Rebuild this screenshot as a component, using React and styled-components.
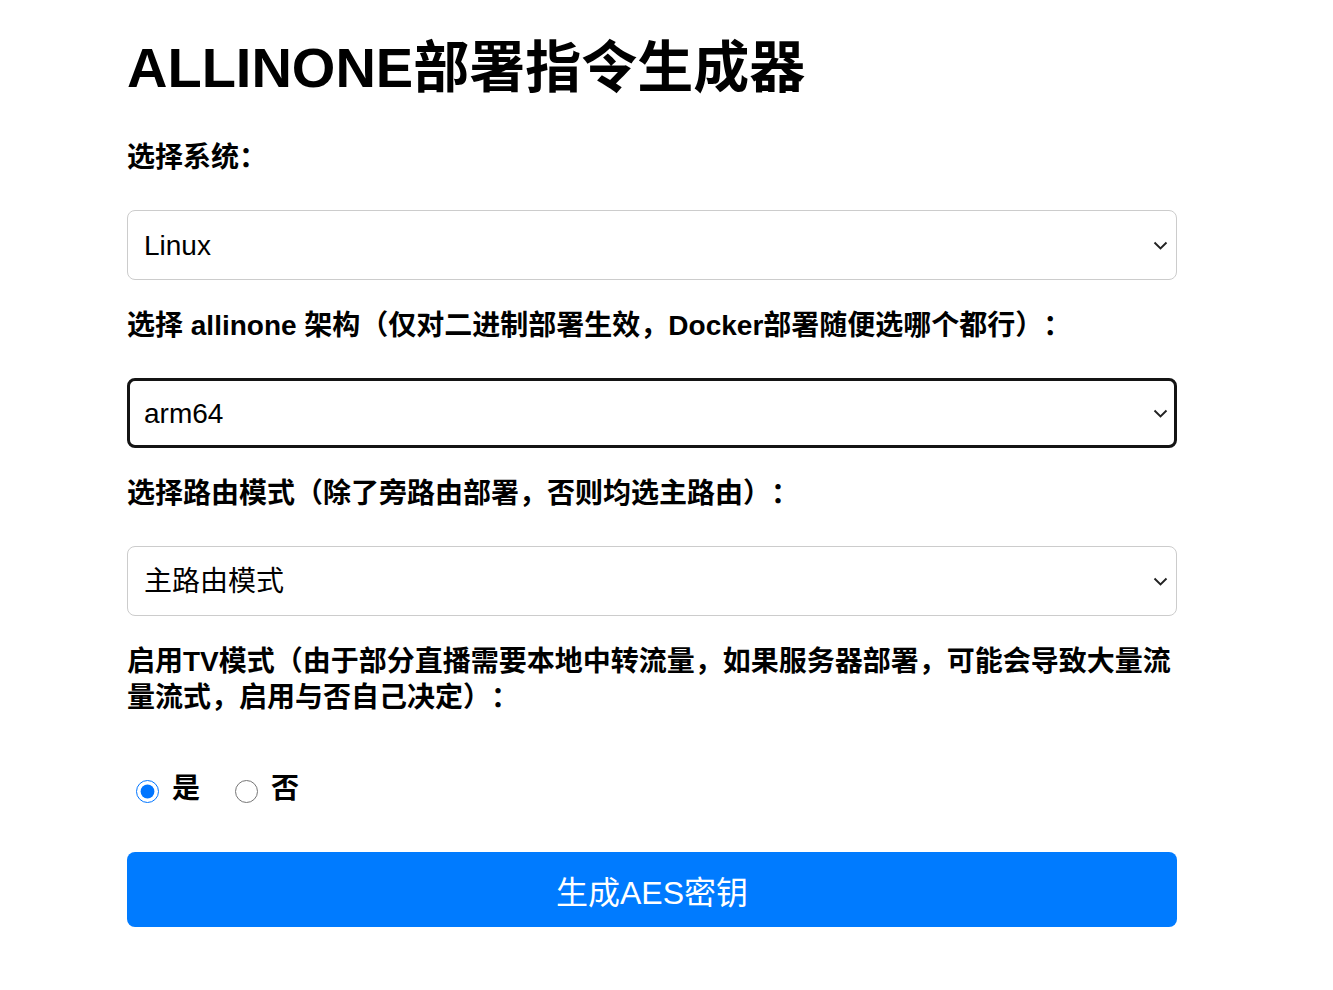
import styled, { createGlobalStyle } from 'styled-components';

const GlobalStyle = createGlobalStyle`
  * {
    box-sizing: border-box;
  }
  body {
    margin: 0;
    background: #ffffff;
    color: #000000;
    font-family: "Liberation Sans", "Noto Sans CJK SC", Arial, sans-serif;
    text-spacing-trim: space-all;
  }
`;

const Page = styled.div`
  width: 1050px;
  margin-left: 127px;
  padding-top: 34px;
  padding-bottom: 40px;
`;

const Title = styled.h1`
  margin: 0 0 39px;
  font-size: 56px;
  line-height: 67px;
  font-weight: 700;
  white-space: nowrap;
`;

const Label = styled.label`
  display: block;
  margin-bottom: 34px;
  font-size: 28px;
  line-height: 36px;
  font-weight: 700;
`;

const SelectWrap = styled.div`
  position: relative;
  margin-bottom: 28px;
`;

const Select = styled.select`
  display: block;
  width: 100%;
  height: 70px;
  appearance: none;
  -webkit-appearance: none;
  background: #ffffff;
  color: #000000;
  font-family: inherit;
  font-size: 28px;
  border-radius: 8px;
  border: ${(p) => (p.$focused ? '3px solid #141414' : '1px solid #cccccc')};
  padding: 0 40px 0 ${(p) => (p.$focused ? '14px' : '16px')};
  outline: none;
`;

const Chevron = styled.svg`
  position: absolute;
  right: 9px;
  top: 50%;
  margin-top: -4px;
  width: 15px;
  height: 9px;
  pointer-events: none;
`;

const RadioRow = styled.div`
  display: flex;
  align-items: center;
  gap: 35px;
  height: 36px;
  margin-top: 55px;
  margin-bottom: 45px;
  padding-left: 9px;
`;

const RadioOption = styled.label`
  display: inline-flex;
  align-items: center;
  gap: 13px;
  font-size: 28px;
  font-weight: 700;
  line-height: 36px;
`;

const Radio = styled.input`
  width: 23px;
  height: 23px;
  margin: 4px 0 0;
`;

const Button = styled.button`
  display: block;
  width: 100%;
  height: 75px;
  border: none;
  border-radius: 8px;
  background: #007bff;
  color: #ffffff;
  font-family: inherit;
  font-size: 32px;
  cursor: pointer;
`;

function Dropdown({ value, options, focused }) {
  return (
    <SelectWrap>
      <Select $focused={focused} defaultValue={value}>
        {options.map((o) => (
          <option key={o} value={o}>
            {o}
          </option>
        ))}
      </Select>
      <Chevron viewBox="0 0 15 9">
        <path d="M1.5 1.5 L7.5 7.5 L13.5 1.5" fill="none" stroke="#222" strokeWidth="1.9" />
      </Chevron>
    </SelectWrap>
  );
}

export default function App() {
  return (
    <>
      <GlobalStyle />
      <Page>
        <Title>ALLINONE部署指令生成器</Title>

        <Label>选择系统：</Label>
        <Dropdown value="Linux" options={['Linux', 'Windows', 'macOS', 'Docker']} />

        <Label>选择 allinone 架构（仅对二进制部署生效，Docker部署随便选哪个都行）：</Label>
        <Dropdown value="arm64" options={['amd64', 'arm64', 'armv7']} focused />

        <Label>选择路由模式（除了旁路由部署，否则均选主路由）：</Label>
        <Dropdown value="主路由模式" options={['主路由模式', '旁路由模式']} />

        <Label>
          启用TV模式（由于部分直播需要本地中转流量，如果服务器部署，可能会导致大量流量流式，启用与否自己决定）：
        </Label>
        <RadioRow>
          <RadioOption>
            <Radio type="radio" name="tv" defaultChecked />
            是
          </RadioOption>
          <RadioOption>
            <Radio type="radio" name="tv" />
            否
          </RadioOption>
        </RadioRow>

        <Button>生成AES密钥</Button>
      </Page>
    </>
  );
}
